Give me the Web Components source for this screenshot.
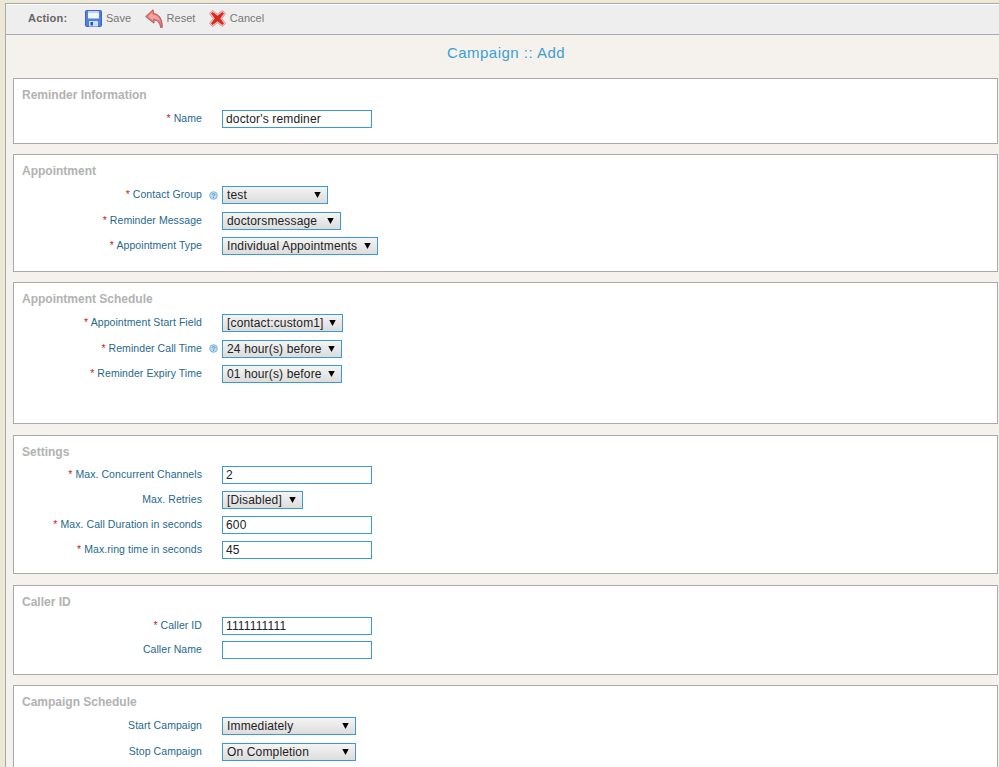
<!DOCTYPE html>
<html>
<head>
<meta charset="utf-8">
<title>Campaign :: Add</title>
<style>
  html, body { margin: 0; height: 100%; overflow: hidden; }
  body { background: #ede8d6; font: 11px "Liberation Sans", Arial, sans-serif; }
</style>
</head>
<body>
<campaign-page>
  <action-bar slot="bar">
    <tool-button label="Save"><svg viewBox="0 0 17 17" width="17" height="17"><rect x=".5" y=".5" width="16" height="16" rx="1" fill="#4f7fe0" stroke="#3f63c4"/><rect x="3" y="1" width="11" height="7.5" fill="#f2f6fd"/><rect x="3" y="1" width="11" height="2" fill="#bcd2f6"/><rect x="4" y="11" width="9" height="5.5" fill="#cfe0fa"/><rect x="5.5" y="12" width="2.5" height="3.5" fill="#2f55b8"/></svg></tool-button>
    <tool-button label="Reset"><svg viewBox="0 0 18 19" width="18" height="19"><path d="M.7 7.6 8 .8 8.6 4.6C13.5 5 17.3 9 17.3 18.4L15.6 18.4C14.8 13.6 12.6 11.2 8.9 10.9L9 14.2Z" fill="#e87a7a" stroke="#a85050" stroke-width=".9" stroke-linejoin="round"/><path d="M3 7.6 7.4 3.6 7.7 5.8C11 6 14 8 15.4 12.6 13.4 10.2 11 9.5 8 9.4L8 11.6Z" fill="#f4a6a6"/></svg></tool-button>
    <tool-button label="Cancel"><svg viewBox="0 0 17 17" width="17" height="17"><path d="M3.5 .4 8.5 4.2 13.5 .4 16.6 3.5 12.8 8.5 16.6 13.5 13.5 16.6 8.5 12.8 3.5 16.6 .4 13.5 4.2 8.5 .4 3.5Z" fill="#f3c9c4" stroke="#c98f8a" stroke-width=".8" stroke-linejoin="round"/><path d="M3.6 2 8.5 5.8 13.4 2 15 3.6 11.2 8.5 15 13.4 13.4 15 8.5 11.2 3.6 15 2 13.4 5.8 8.5 2 3.6Z" fill="#d9281e"/></svg></tool-button>
  </action-bar>

  <form-panel heading="Reminder Information">
    <form-row label="Name" required><text-field>doctor's remdiner</text-field></form-row>
  </form-panel>

  <form-panel heading="Appointment">
    <form-row label="Contact Group" required help tall><select-field width="106">test</select-field></form-row>
    <form-row label="Reminder Message" required tall><select-field width="119">doctorsmessage</select-field></form-row>
    <form-row label="Appointment Type" required tall><select-field width="156">Individual Appointments</select-field></form-row>
  </form-panel>

  <form-panel heading="Appointment Schedule" extra="24.5">
    <form-row label="Appointment Start Field" required tall><select-field width="121">[contact:custom1]</select-field></form-row>
    <form-row label="Reminder Call Time" required help tall><select-field width="120">24 hour(s) before</select-field></form-row>
    <form-row label="Reminder Expiry Time" required tall><select-field width="120">01 hour(s) before</select-field></form-row>
  </form-panel>

  <form-panel heading="Settings" extra="-0.5">
    <form-row label="Max. Concurrent Channels" required><text-field>2</text-field></form-row>
    <form-row label="Max. Retries" tall><select-field width="81">[Disabled]</select-field></form-row>
    <form-row label="Max. Call Duration in seconds" required><text-field>600</text-field></form-row>
    <form-row label="Max.ring time in seconds" required><text-field>45</text-field></form-row>
  </form-panel>

  <form-panel heading="Caller ID" extra="-0.5" style="margin-top: .5px">
    <form-row label="Caller ID" required><text-field>1111111111</text-field></form-row>
    <form-row label="Caller Name"><text-field></text-field></form-row>
  </form-panel>

  <form-panel heading="Campaign Schedule">
    <form-row label="Start Campaign" tall><select-field width="134">Immediately</select-field></form-row>
    <form-row label="Stop Campaign" tall><select-field width="134">On Completion</select-field></form-row>
  </form-panel>
</campaign-page>

<script>
  class CampaignPage extends HTMLElement {
    constructor() {
      super();
      this.attachShadow({ mode: "open" }).innerHTML = `
        <style>
          :host { display: block; margin: 3px 0 0 5px; border-top: 1px solid #aaa; border-left: 1px solid #aaa; background: #f5f2ed; min-height: 100vh; }
          h1 { margin: 0; height: 43px; padding-left: 7px; font: normal 15px/35px "Liberation Sans", Arial, sans-serif; letter-spacing: .48px; color: #3a9fd4; text-align: center; }
          .panels { display: flex; flex-direction: column; gap: 10.5px; margin: 0 1px 0 7px; }
        </style>
        <slot name="bar"></slot>
        <h1>Campaign :: Add</h1>
        <div class="panels"><slot></slot></div>`;
    }
  }

  class ActionBar extends HTMLElement {
    constructor() {
      super();
      this.attachShadow({ mode: "open" }).innerHTML = `
        <style>
          :host { display: flex; align-items: center; height: 27px; padding: 0 0 2px 22px; border-top: 1px solid #fff; border-bottom: 1px solid #aaa; background: #eee; }
          b { width: 57px; font-size: 11px; color: #666; letter-spacing: .2px; margin-bottom: 1px; }
          .tools { display: flex; gap: 13.5px; }
        </style>
        <b>Action:</b>
        <div class="tools"><slot></slot></div>`;
    }
  }

  class ToolButton extends HTMLElement {
    constructor() {
      super();
      this.attachShadow({ mode: "open" }).innerHTML = `
        <style>
          :host { display: inline-flex; align-items: center; gap: 4px; color: #777; font-size: 11px; cursor: pointer; }
          ::slotted(svg) { display: block; }
          span { margin-bottom: 1px; }
        </style>
        <slot></slot><span>${this.getAttribute("label")}</span>`;
    }
  }

  class FormPanel extends HTMLElement {
    constructor() {
      super();
      const extra = Number(this.getAttribute("extra") || 0);
      this.attachShadow({ mode: "open" }).innerHTML = `
        <style>
          :host { display: block; border: 1px solid #aaa; background: #fff; padding: 8px 0 ${11.5 + extra}px; }
          h2 { margin: 0 0 3.5px 8px; font: bold 12px/16px "Liberation Sans", Arial, sans-serif; color: #b2b2b2; }
        </style>
        <h2>${this.getAttribute("heading")}</h2>
        <slot></slot>`;
    }
  }

  class FormRow extends HTMLElement {
    constructor() {
      super();
      const star = this.hasAttribute("required") ? `<i>*</i> ` : "";
      const help = this.hasAttribute("help")
        ? `<svg viewBox="0 0 9 9" width="9" height="9"><circle cx="4.5" cy="4.5" r="3.8" fill="#bcdcf2" stroke="#7ab6e0"/><path d="M3.2 3.6C3.4 2.2 5.9 2.3 5.8 3.7 5.7 4.6 4.5 4.6 4.5 5.5" fill="none" stroke="#3f8cc2" stroke-width=".9"/><rect x="4.1" y="6" width=".9" height=".9" fill="#3f8cc2"/></svg>`
        : "";
      this.attachShadow({ mode: "open" }).innerHTML = `
        <style>
          :host { display: grid; grid-template-columns: 188px 20px 1fr; align-items: center; height: 24.5px; }
          :host([tall]) { height: 25.5px; }
          label { padding-bottom: 2px; text-align: right; font-size: 10.5px; letter-spacing: .07px; color: #25688f; white-space: nowrap; }
          i { font-style: normal; color: #c81e1e; }
          .help { display: flex; padding-left: 7px; }
          .help svg { display: block; }
        </style>
        <label>${star}${this.getAttribute("label")}</label>
        <span class="help">${help}</span>
        <slot></slot>`;
    }
  }

  class TextField extends HTMLElement {
    constructor() {
      super();
      this.attachShadow({ mode: "open" }).innerHTML = `
        <style>
          :host { display: block; box-sizing: border-box; width: 150px; height: 18px; padding: 0 3px; border: 1px solid #3a9bd2; background: #fff; color: #222; font: 12px/16px "Liberation Sans", Arial, sans-serif; letter-spacing: .15px; white-space: nowrap; overflow: hidden; }
        </style>
        <slot></slot>`;
      this.setAttribute("role", "textbox");
    }
  }

  class SelectField extends HTMLElement {
    constructor() {
      super();
      this.attachShadow({ mode: "open" }).innerHTML = `
        <style>
          :host { display: flex; justify-content: space-between; align-items: center; box-sizing: border-box; width: ${this.getAttribute("width")}px; height: 18px; padding: 0 6px 0 4px; border: 1px solid #3a9bd2; background: linear-gradient(#f4f4f4, #dcdcdc); color: #222; font: 12px/16px "Liberation Sans", Arial, sans-serif; letter-spacing: .15px; white-space: nowrap; }
          svg { flex: none; display: block; }
        </style>
        <span><slot></slot></span>
        <svg viewBox="0 0 7 6" width="7" height="6"><path d="M.3 0H6.7L3.5 6Z" fill="#000"/></svg>`;
      this.setAttribute("role", "combobox");
    }
  }

  customElements.define("campaign-page", CampaignPage);
  customElements.define("action-bar", ActionBar);
  customElements.define("tool-button", ToolButton);
  customElements.define("form-panel", FormPanel);
  customElements.define("form-row", FormRow);
  customElements.define("text-field", TextField);
  customElements.define("select-field", SelectField);
</script>
</body>
</html>
